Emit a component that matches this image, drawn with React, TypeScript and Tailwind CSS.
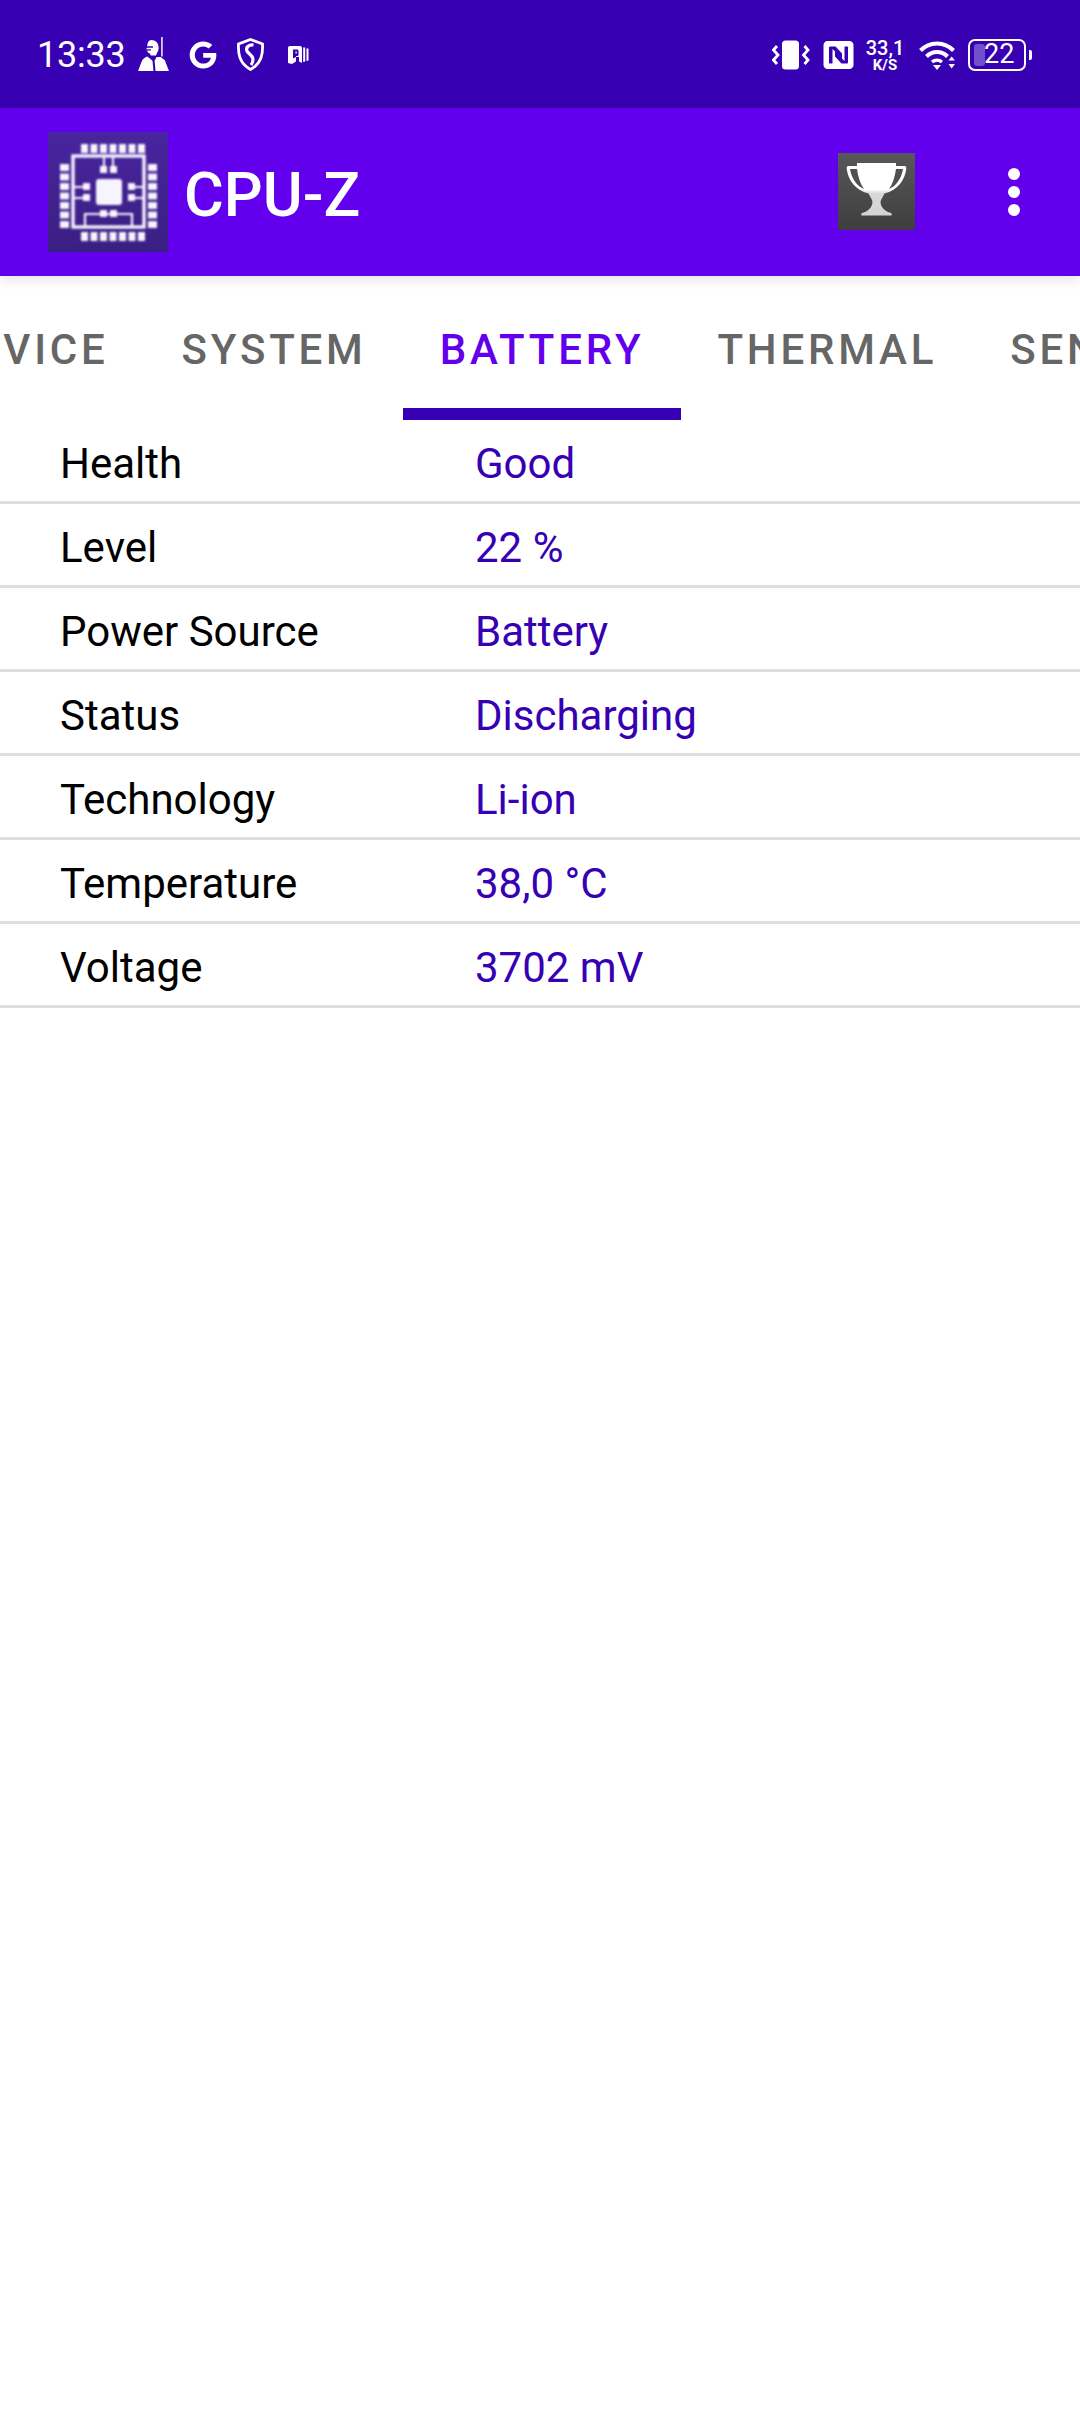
import React from "react";
import { FaGoogle } from "react-icons/fa";

const rows = [
  { label: "Health", value: "Good" },
  { label: "Level", value: "22 %" },
  { label: "Power Source", value: "Battery" },
  { label: "Status", value: "Discharging" },
  { label: "Technology", value: "Li-ion" },
  { label: "Temperature", value: "38,0 °C" },
  { label: "Voltage", value: "3702 mV" },
];

const tabs = ["DEVICE", "SYSTEM", "BATTERY", "THERMAL", "SENSORS"];

const SoldierIcon = () => (
  <svg width="33" height="35" viewBox="0 0 32 34" fill="white">
    <path d="M14 3c4 0 7 3 7 7.500 0 2-.6 3.800-1.600 5l-1 2.500h-5l-1-2c-2-.5-2.400-2-2.400-3l-1.500-.3 1.200-2.200C10 6 11 3 14 3z" />
    <path d="M23.500 0h1.400v19h-1.400z" />
    <path d="M10 19l5 4 1 10H1l3-8c1-3 3-5 6-6zM19 19.500h4l4 3 4 10.500H18l-1-10z" />
    <path d="M8.500 9h7v1.400h-7zM8.500 12h5v1.200h-5z" fill="#3700B3" />
  </svg>
);

const ShieldIcon = () => (
  <svg width="29" height="33" viewBox="0 0 28 33" fill="none" stroke="white">
    <path d="M14 1.500l12 4.500c.5 9-.5 19-12 25.500C2.500 25 1.500 15 2 6z" strokeWidth="2.800" />
    <path d="M17 7c-5-.5-8 2.500-6.500 6 1.500 3 5.500 4 6 8 .2 2-.5 4-2 6" strokeWidth="3.200" />
  </svg>
);

const ParallelIcon = () => (
  <svg width="21" height="20" viewBox="0 0 21 20" fill="white">
    <path fillRule="evenodd" d="M2 1h10c1.200 0 2 .8 2 2v15l-3-1.500V12H8v4.500L4 19l-2-.5-2-.5V3c0-1.200.8-2 2-2zM5 4.500v9l3-1.500v-1h1c1 0 1.500-.5 1.500-1.500V6c0-1-.5-1.500-1.500-1.500zM7.500 6.500h.8c.3 0 .5.200.5.500v1c0 .3-.2.500-.5.500h-.8z" />
    <path d="M15.200 2.500h2v14l-2 .6zM18.500 3.500H20.500v12l-2 .5z" />
  </svg>
);

const VibrateIcon = () => (
  <svg width="38" height="30" viewBox="0 0 38 30" fill="none">
    <rect x="10" y="0.500" width="17" height="29" rx="3.500" fill="white" />
    <path d="M5 6L1.500 10 6 15l-4.500 5L5 24" stroke="white" strokeWidth="2.800" />
    <path d="M32.500 6L36 10l-4.500 5 4.500 5-3.500 4" stroke="white" strokeWidth="2.800" />
  </svg>
);

const NfcIcon = () => (
  <svg width="31" height="28" viewBox="0 0 30 28">
    <path
      fill="white"
      fillRule="evenodd"
      d="M4 0h22c2.200 0 4 1.800 4 4v20c0 2.200-1.800 4-4 4H4c-2.200 0-4-1.800-4-4V4c0-2.200 1.800-4 4-4zM7 5.500c-1 0-1.500.5-1.500 1.500v14.500c0 .6.400 1 1 1H9V8l9.500 9.500V12.500l-6-6.500c-.4-.4-.8-.5-1.300-.5zM21 5.500V20L11.500 10.500v5l6 6.500c.4.400.8.500 1.300.5H23c1 0 1.500-.5 1.500-1.500V6.500c0-.6-.4-1-1-1z"
    />
  </svg>
);

const WifiIcon = () => (
  <svg width="37" height="30" viewBox="0 0 37 30" fill="none" stroke="white" strokeWidth="4">
    <path d="M1.500 10.500C10.500 1 25.500 1 34.500 10.500" />
    <path d="M7.500 16.500c6-6 15-6 21 0" />
    <path d="M13 22c3-2.500 7-2.500 10 0" strokeWidth="3.400" />
    <path d="M14 25h8L18 30z" fill="white" stroke="none" />
    <path d="M29.500 20.500l3.200-4 3.200 4zM29.500 24h6.400l-3.200 4.500z" fill="white" stroke="none" />
  </svg>
);

const TrophyIcon = () => (
  <svg width="77" height="77" viewBox="0 0 77 77" className="block">
    <defs>
      <linearGradient id="trophyBg" x1="0" y1="0" x2="0" y2="1">
        <stop offset="0" stopColor="#585858" />
        <stop offset="1" stopColor="#3e3e3e" />
      </linearGradient>
      <linearGradient id="trophyCup" x1="0" y1="0" x2="0" y2="1">
        <stop offset="0" stopColor="#ffffff" />
        <stop offset="0.5" stopColor="#ffffff" />
        <stop offset="0.58" stopColor="#d8d8d8" />
        <stop offset="1" stopColor="#d4d4d4" />
      </linearGradient>
    </defs>
    <rect width="77" height="77" fill="url(#trophyBg)" />
    <path
      d="M19 10h39v3h8.500c1.500 0 2 1 1.800 2.500C67 27 60 37 46.500 40.500L43 47c-.8 2-.5 4 1 7 1.500 2.500 4.500 5 9 6 1 .3 1 2.500 0 2.500H24c-1 0-1-2.200 0-2.500 4.500-1 7.500-3.500 9-6 1.500-3 1.800-5 1-7l-3.500-6.500C17 37 10 27 8.700 15.500 8.500 14 9 13 10.500 13H19z"
      fill="url(#trophyCup)"
    />
    <path d="M12 16c1.500 9 6 16.500 14 20-3.500-5-6-12-7-20zM65 16c-1.500 9-6 16.500-14 20 3.500-5 6-12 7-20z" fill="#505050" />
  </svg>
);

// app launcher icon: chip with pins and inner traces
const ChipLogo = () => {
  const steps = [0, 1, 2, 3, 4, 5, 6];
  return (
    <svg width="120" height="120" viewBox="0 0 120 120" className="block">
      <defs>
        <linearGradient id="logoBg" x1="0" y1="0" x2="0" y2="1">
          <stop offset="0" stopColor="#49249f" />
          <stop offset="1" stopColor="#3a1f82" />
        </linearGradient>
      </defs>
      <rect width="120" height="120" fill="url(#logoBg)" />
      <g className="blur-[1px]" fill="#f8f4fe">
        {steps.map((i) => (
          <g key={i}>
            <rect x={33 + i * 9.500} y="12" width="7" height="9" />
            <rect x={33 + i * 9.500} y="100" width="7" height="9" />
            <rect x="12" y={32 + i * 9.500} width="9" height="7" />
            <rect x="100" y={32 + i * 9.500} width="9" height="7" />
          </g>
        ))}
        <rect x="48" y="47" width="26" height="26" rx="3" />
        <rect x="52" y="34" width="7" height="7" />
        <rect x="62" y="34" width="7" height="7" />
        <rect x="35" y="51" width="7" height="7" />
        <rect x="35" y="62" width="7" height="7" />
        <rect x="80" y="51" width="7" height="7" />
        <rect x="80" y="62" width="7" height="7" />
        <rect x="52" y="78" width="7" height="7" />
        <rect x="62" y="78" width="7" height="7" />
        <g fill="none" stroke="#f8f4fe">
          <rect x="25" y="24" width="71" height="71" strokeWidth="3.400" />
          <path d="M56 25v12M65 25v12M26 55h12M26 66h12M84 55h12M84 66h12" strokeWidth="2" />
          <path d="M37 94V82h47v12" strokeWidth="2.200" />
        </g>
      </g>
    </svg>
  );
};

const BatteryIcon = () => (
  <div className="flex items-center">
    <div className="flex h-[32px] w-[58px] items-center rounded-[7px] border-[2px] border-white pl-[4px]">
      <div className="h-[22px] w-[11px] rounded-[3px] bg-[#7350cb]" />
      <span className="ml-[-1px] text-[27px] leading-none text-white">22</span>
    </div>
    <div className="ml-[3px] h-[10px] w-[3px] rounded-r-[2px] bg-white" />
  </div>
);

const StatusBar = () => (
  <div className="flex h-[108px] items-center justify-between bg-[#3700B3] pl-[37px] pr-[48px] pt-[1px] text-white">
    <div className="flex items-center">
      <span className="w-[100px] text-[36px] leading-none tracking-[-0.2px]">13:33</span>
      <div className="mr-[19px] flex"><SoldierIcon /></div>
      <FaGoogle className="mr-[19px] h-[28px] w-[28px]" />
      <div className="mr-[23px] flex"><ShieldIcon /></div>
      <ParallelIcon />
    </div>
    <div className="flex items-center">
      <div className="mr-[13px] flex"><VibrateIcon /></div>
      <div className="mr-[12px] flex"><NfcIcon /></div>
      <div className="mr-[15px] flex w-[38px] flex-col items-center font-medium">
        <span className="text-[20px] leading-[20px]">33,1</span>
        <span className="text-[15px] font-bold leading-[14px]">K/S</span>
      </div>
      <div className="mr-[12px] flex"><WifiIcon /></div>
      <BatteryIcon />
    </div>
  </div>
);

const AppBar = () => (
  <div className="relative z-10 flex h-[168px] items-center bg-[#6200EE] pl-[48px] pr-[60px] shadow-[0_3px_12px_rgba(0,0,0,0.12)]">
    <ChipLogo />
    <h1 className="ml-[16px] pt-[6px] text-[61px] font-medium leading-none text-white">CPU-Z</h1>
    <div className="ml-auto mb-[2px] mr-[93px]">
      <TrophyIcon />
    </div>
    <div className="flex flex-col gap-[6px]">
      <span className="h-[12px] w-[12px] rounded-full bg-white" />
      <span className="h-[12px] w-[12px] rounded-full bg-white" />
      <span className="h-[12px] w-[12px] rounded-full bg-white" />
    </div>
  </div>
);

const TabStrip = () => (
  <div className="flex h-[144px] overflow-hidden">
    <div className="ml-[-92px] flex shrink-0">
      {tabs.map((tab) => {
        const active = tab === "BATTERY";
        return (
          <div
            key={tab}
            className={`flex h-[144px] shrink-0 items-center border-b-[12px] px-[36.5px] pt-[14px] text-[42px] font-medium tracking-[3.800px] ${
              active ? "border-[#3700B3] text-[#6200EE]" : "border-transparent text-[#666666]"
            }`}
          >
            {tab}
          </div>
        );
      })}
    </div>
  </div>
);

const InfoRow = ({ label, value }: { label: string; value: string }) => (
  <div className="flex h-[84px] items-center border-b-[3px] border-[#dedede] pl-[60px] pt-[5px] text-[42px]">
    <span className="w-[415px] text-black">{label}</span>
    <span className="text-[#3700B3]">{value}</span>
  </div>
);

export default function App() {
  return (
    <div className="h-[2436px] w-[1080px] overflow-hidden bg-white font-['Roboto',sans-serif]">
      <StatusBar />
      <AppBar />
      <TabStrip />
      {rows.map((row) => (
        <InfoRow key={row.label} label={row.label} value={row.value} />
      ))}
    </div>
  );
}
